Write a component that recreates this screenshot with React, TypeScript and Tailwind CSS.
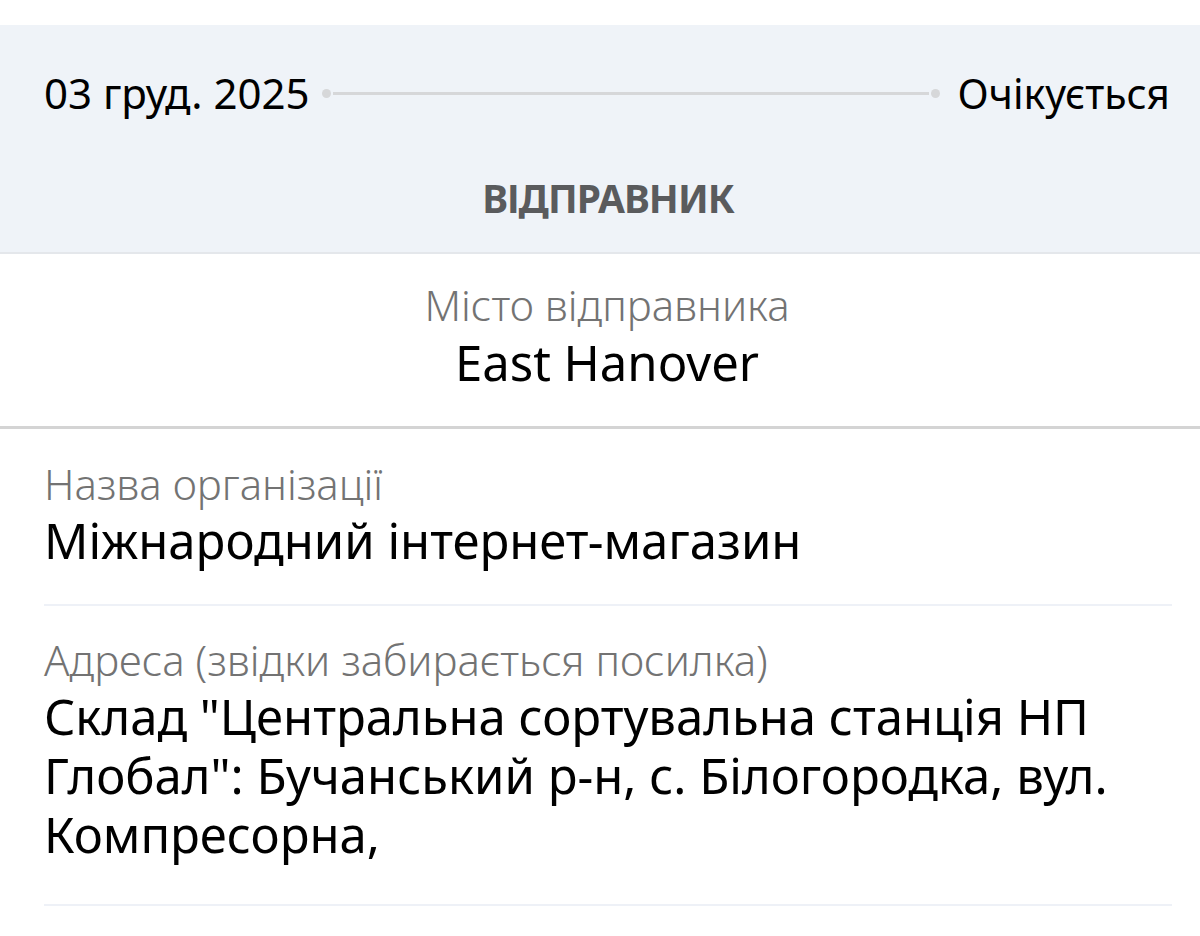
export default function App() {
  return (
    <div className="min-h-[936px] bg-white pt-[25px] text-black" style={{ fontFamily: '"Noto Sans", sans-serif' }}>
      {/* Status band */}
      <div className="bg-[#eff3f8] border-b-2 border-[#e4e7eb]">
        <div className="flex items-center pl-[44px] pr-[30px] h-[136px]">
          <span className="text-[42px] leading-none whitespace-nowrap">03 груд. 2025</span>
          <div className="flex-1 flex items-center ml-[12px] mr-[18px] gap-[2px]">
            <span className="w-[9px] h-[9px] rounded-full bg-[#d6d7d9]" />
            <span className="flex-1 h-[3px] bg-[#d6d7d9]" />
            <span className="w-[9px] h-[9px] rounded-full bg-[#d6d7d9]" />
          </div>
          <span className="text-[41px] leading-none whitespace-nowrap">Очікується</span>
        </div>
        <div className="pt-[12px] pb-[29px] pl-[16px] text-center">
          <span className="text-[39px] font-bold text-[#5a5b5d] leading-[50px] tracking-tight">ВІДПРАВНИК</span>
        </div>
      </div>

      {/* City */}
      <div className="flex flex-col items-center pt-[24px] pb-[34px] pl-[14px] border-b-[3px] border-[#d4d4d4]">
        <span className="text-[42px] leading-[54px] font-light text-[#737373]">Місто відправника</span>
        <span className="text-[49px] leading-[60px]">East Hanover</span>
      </div>

      {/* Fields */}
      <div className="pl-[44px] pr-[28px]">
        <div className="pt-[28px] pb-[34px] border-b-2 border-[#eef1f7]">
          <div className="text-[42px] leading-[54px] font-light text-[#737373]">Назва організації</div>
          <div className="text-[49px] leading-[59px]">Міжнародний інтернет-магазин</div>
        </div>
        <div className="pt-[27px] pb-[40px] border-b-2 border-[#eef1f7]">
          <div className="text-[42px] leading-[54px] font-light text-[#737373]">Адреса (звідки забирається посилка)</div>
          <div className="text-[49px] leading-[59px]">
            Склад "Центральна сортувальна станція НП Глобал": Бучанський р-н, с. Білогородка, вул. Компресорна,
          </div>
        </div>
      </div>
    </div>
  );
}
